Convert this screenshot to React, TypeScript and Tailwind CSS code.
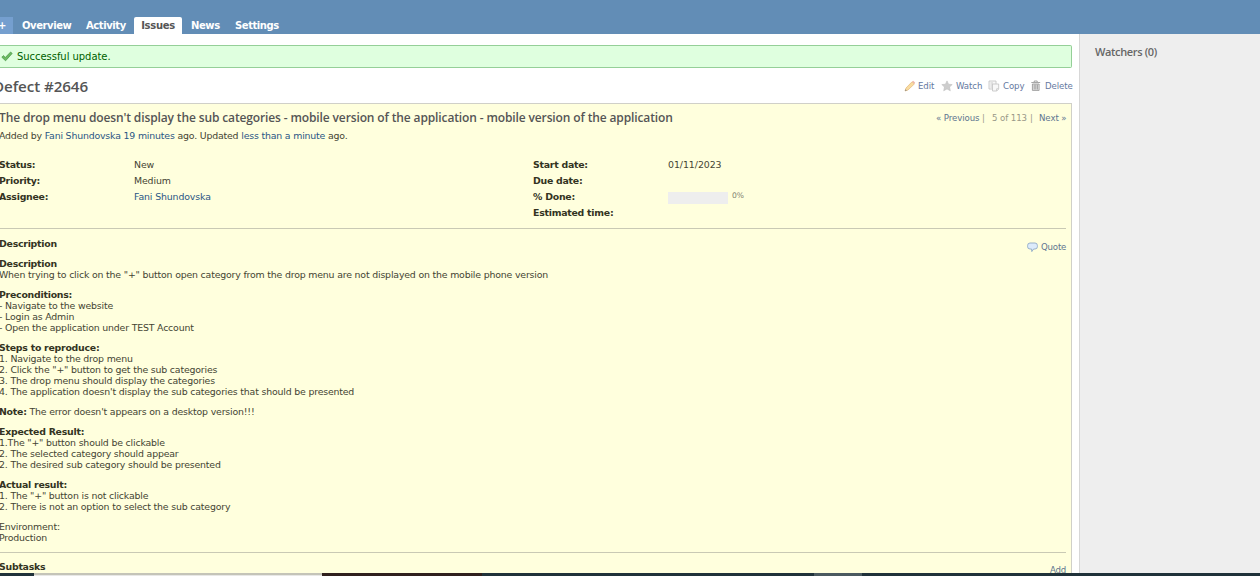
import type { ReactNode } from "react";

const tabs = [
  { label: "Overview", cls: "ml-[9px] w-[48px]" },
  { label: "Activity", cls: "ml-[16px] w-[39px]" },
  { label: "Issues", cls: "" },
  { label: "News", cls: "ml-[9px] w-[28px]" },
  { label: "Settings", cls: "ml-[16px] w-[42px]" },
];

const sections: { title?: string; inline?: string; lines: string[] }[] = [
  {
    title: "Description",
    lines: [
      'When trying to click on the "+" button open category from the drop menu are not displayed on the mobile phone version',
    ],
  },
  {
    title: "Preconditions:",
    lines: ["- Navigate to the website", "- Login as Admin", "- Open the application under TEST Account"],
  },
  {
    title: "Steps to reproduce:",
    lines: [
      "1. Navigate to the drop menu",
      '2. Click the "+" button to get the sub categories',
      "3. The drop menu should display the categories",
      "4. The application doesn't display the sub categories that should be presented",
    ],
  },
  { inline: "Note:", lines: ["The error doesn't appears on a desktop version!!!"] },
  {
    title: "Expected Result:",
    lines: [
      '1.The "+" button should be clickable',
      "2. The selected category should appear",
      "2. The desired sub category should be presented",
    ],
  },
  {
    title: "Actual result:",
    lines: ['1. The "+" button is not clickable', "2. There is not an option to select the sub category"],
  },
  { lines: ["Environment:", "Production"] },
];

function Label({ children }: { children: ReactNode }) {
  return <span className="font-bold tracking-[-0.25px] text-[#333322]">{children}</span>;
}

function Check() {
  return (
    <svg className="h-[12px] w-[13px]" viewBox="0 0 13 12">
      <path d="M1.8 6.2 3.6 4.6 5.2 6.6 10.6 1 12.2 2.4 5.6 9.8Z" fill="#6cbb62" stroke="#459443" strokeWidth=".7" />
    </svg>
  );
}

function Pencil() {
  return (
    <svg className="h-[12px] w-[12px]" viewBox="0 0 12 12">
      <path d="M1 11 2 8 8 1.8 10.3 4 4 10Z" fill="#f9dca0" stroke="#e3b878" strokeWidth=".7" />
      <path d="M8 1.8 9.2.8 11.2 2.8 10.3 4Z" fill="#eeb5a8" />
      <path d="M1 11 1.6 9.2 2.8 10.4Z" fill="#888" />
    </svg>
  );
}

function Star() {
  return (
    <svg className="h-[12px] w-[12px]" viewBox="0 0 12 12">
      <path d="M6 .9 7.5 4.2 11.2 4.6 8.5 7 9.3 10.8 6 8.9 2.7 10.8 3.5 7 .8 4.6 4.5 4.2Z" fill="#cdcdcd" stroke="#c0c0c0" strokeWidth=".6" />
    </svg>
  );
}

function CopyIcon() {
  return (
    <svg className="h-[12px] w-[12px]" viewBox="0 0 12 12" fill="#f8f8f8" stroke="#c6c6c6" strokeWidth=".9">
      <path d="M1 1H8V9H1Z" />
      <path d="M2.5 3H5M2.5 5H4M2.5 7H4" />
      <path d="M4.5 4H10.7V9L8.8 11H4.5Z" />
      <path d="M10.7 8.8H8.7V11" />
    </svg>
  );
}

function Trash() {
  return (
    <svg className="h-[12px] w-[12px]" viewBox="0 0 12 12" fill="none" stroke="#8f8f8f" strokeWidth=".8">
      <path d="M4.2 2V1H7.2V2M1.3 2.5H10.2" />
      <path d="M2.4 4V10.4H9.1V4Z" fill="#e8e8e8" />
      <path d="M4.2 4.5V9.5M5.8 4.5V9.5M7.4 4.5V9.5" />
    </svg>
  );
}

function Bubble() {
  return (
    <svg className="h-[11px] w-[11px]" viewBox="0 0 11 11">
      <path d="M3 1H8Q10.4 1 10.4 3.5V4.7Q10.4 7 8 7H6.6L4.8 9.6 4.6 7H3Q.6 7 .6 4.7V3.5Q.6 1 3 1Z" fill="#dcebfb" stroke="#8fa9c6" strokeWidth=".9" />
    </svg>
  );
}

export default function App() {
  return (
    <div className="flex h-[576px] w-[1260px] flex-col overflow-hidden bg-white font-['DejaVu_Sans',sans-serif] text-[9.4px] tracking-[-0.18px] text-[#444433]">
      <header className="flex h-[34px] shrink-0 items-end bg-[#628db6] text-[10px] font-bold text-white">
        <div className="h-[17px] w-[13px] bg-[#759fcf] leading-[17px]">
          <span className="-ml-[2px]">+</span>
        </div>
        {tabs.map((t) =>
          t.label === "Issues" ? (
            <div key={t.label} className="ml-[9px] h-[17px] w-[48px] rounded-t-[2px] bg-white text-center leading-[18px] tracking-[-0.3px] text-[#555]">
              {t.label}
            </div>
          ) : (
            <div key={t.label} className={"h-[17px] whitespace-nowrap leading-[18px] tracking-[-0.42px] " + t.cls}>
              {t.label}
            </div>
          ),
        )}
      </header>

      <div className="flex h-[539px] shrink-0 overflow-hidden">
        <main className="w-[1079px] pt-[11px]">
          <div className="flex h-[23px] w-[1072px] items-center rounded-r-[2px] border border-l-0 border-[#95cf98] bg-[#dfffdf] text-[10px] tracking-[-0.05px] text-[#005f00]">
            <Check />
            <span className="ml-[4px]">Successful update.</span>
          </div>

          <div className="flex h-[35px] w-[1072px] items-center justify-between pt-[1px]">
            <h2 className="-ml-[7px] font-['Open_Sans',sans-serif] text-[15.2px] font-semibold tracking-[-0.1px] text-[#555]">Defect #2646</h2>
            <div className="flex h-[12px] items-center text-[8.6px] tracking-[-0.1px] whitespace-nowrap text-[#6478a0]">
              <Pencil />
              <span className="ml-[2px] w-[16px]">Edit</span>
              <span className="ml-[7px] flex"><Star /></span>
              <span className="ml-[3px] w-[25px]">Watch</span>
              <span className="ml-[7px] flex"><CopyIcon /></span>
              <span className="ml-[3px] w-[20px]">Copy</span>
              <span className="ml-[7px] flex"><Trash /></span>
              <span className="ml-[3px] w-[27px]">Delete</span>
            </div>
          </div>

          <section className="h-[480px] w-[1072px] border-t border-r border-[#d0d0c8] bg-[#ffffdd] pr-[5px]">
            <div className="flex h-[26px] items-center justify-between">
              <h3 className="-ml-px pt-px font-['Open_Sans',sans-serif] text-[12px] font-semibold tracking-[-0.128px] whitespace-nowrap text-[#555]">
                The drop menu doesn't display the sub categories - mobile version of the application - mobile version of the application
              </h3>
              <div className="flex pt-[3px] text-[8.6px] tracking-[-0.08px] whitespace-nowrap text-[#999988]">
                <span className="w-[46px] text-[#607590]">« Previous</span>
                <span className="w-[10px]">|</span>
                <span className="w-[38px]">5 of 113</span>
                <span className="w-[9px]">|</span>
                <span className="w-[27px] text-[#607590]">Next »</span>
              </div>
            </div>
            <p className="-ml-px h-[12px] leading-[12px] whitespace-nowrap">
              Added by <span className="text-[#2a5685]">Fani Shundovska</span> <span className="text-[#2a5685]">19 minutes</span> ago. Updated{" "}
              <span className="text-[#2a5685]">less than a minute</span> ago.
            </p>

            <div className="mt-[15px] flex h-[71px] leading-[16px]">
              <div className="-ml-px flex w-[135px] flex-col">
                <Label>Status:</Label>
                <Label>Priority:</Label>
                <Label>Assignee:</Label>
              </div>
              <div className="flex w-[399px] flex-col tracking-[-0.13px]">
                <span>New</span>
                <span>Medium</span>
                <span className="text-[#2a5685]">Fani Shundovska</span>
              </div>
              <div className="flex w-[135px] flex-col">
                <Label>Start date:</Label>
                <Label>Due date:</Label>
                <Label>% Done:</Label>
                <Label>Estimated time:</Label>
              </div>
              <div>
                <div className="h-[35px] tracking-[-0.05px]">01/11/2023</div>
                <div className="flex">
                  <div className="h-[12px] w-[60px] bg-[#eeeeee]" />
                  <span className="ml-[4px] h-[10px] text-[7.6px] leading-[8px] text-[#808070]">0%</span>
                </div>
              </div>
            </div>

            <div className="flex h-[30px] items-start justify-between border-t border-[#c9c9b4] pt-[9px]">
              <div className="-mt-px -ml-px leading-[13px]"><Label>Description</Label></div>
              <div className="flex items-center pt-[3px] text-[8.6px] leading-[13px] text-[#607590]">
                <Bubble />
                <span className="ml-[3px] w-[25px]">Quote</span>
              </div>
            </div>

            <div className="-ml-px flex h-[294px] flex-col gap-[9px] leading-[11px]">
              {sections.map((s, i) => (
                <div key={i} className="flex flex-col whitespace-nowrap">
                  {s.title && <Label>{s.title}</Label>}
                  {s.lines.map((l) => (
                    <span key={l}>
                      {s.inline && <><Label>{s.inline}</Label>{" "}</>}
                      {l}
                    </span>
                  ))}
                </div>
              ))}
            </div>

            <div className="flex items-start justify-between border-t border-[#c9c9b4] pt-[7px] leading-[13px]">
              <span className="-ml-px"><Label>Subtasks</Label></span>
              <span className="w-[16px] pt-[4px] text-[8.6px] text-[#607590]">Add</span>
            </div>
          </section>
        </main>
        <aside className="flex-1 border-l border-[#d7d7d7] bg-[#eeeeee] pt-[10px] pl-[15px]">
          <h3 className="font-['Open_Sans',sans-serif] text-[11px] leading-[16px] font-semibold tracking-[-0.35px] text-[#666]">Watchers (0)</h3>
        </aside>
      </div>
      <footer className="flex h-[3px] shrink-0 bg-[#20323a]">
        <div className="ml-[34px] w-[288px] border-t-2 border-[#c4c4b8] bg-[#e8e8e6]" />
        <div className="w-[160px] bg-[#30201e]" />
        <div className="ml-[332px] w-[48px] bg-[#4b5a60]" />
      </footer>
    </div>
  );
}
